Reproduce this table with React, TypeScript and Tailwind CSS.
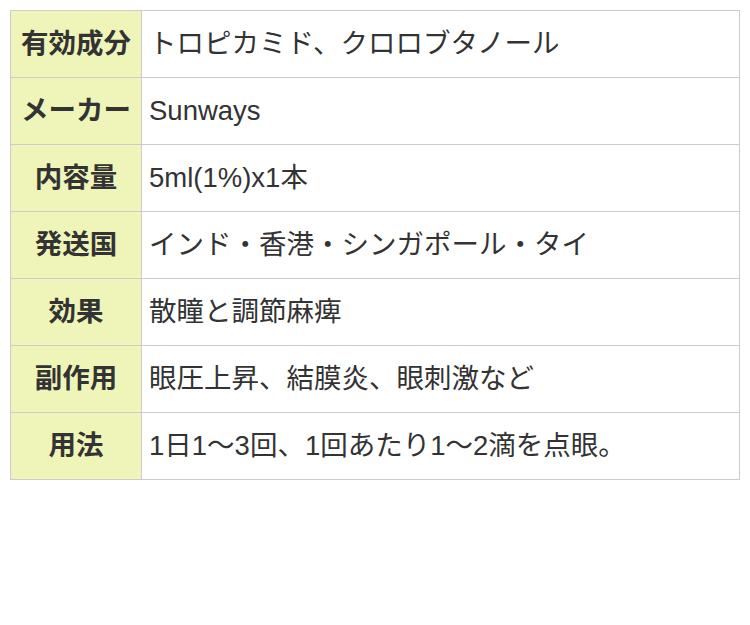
import React from "react";

const rows: [string, string][] = [
  ["有効成分", "トロピカミド、クロロブタノール"],
  ["メーカー", "Sunways"],
  ["内容量", "5ml(1%)x1本"],
  ["発送国", "インド・香港・シンガポール・タイ"],
  ["効果", "散瞳と調節麻痺"],
  ["副作用", "眼圧上昇、結膜炎、眼刺激など"],
  ["用法", "1日1〜3回、1回あたり1〜2滴を点眼。"],
];

export default function App() {
  return (
    <div className="w-[750px] h-[625px] bg-white pt-[10px] pl-[10px]" style={{ fontFamily: '"Liberation Sans", "Noto Sans CJK JP", sans-serif' }}>
      <table className="w-[730px] border-collapse text-[27.5px] text-[#333]">
        <tbody>
          {rows.map(([k, v]) => (
            <tr key={k} className="h-[67px]">
              <th className="w-[131px] border border-[#ccc] bg-[#eff5b9] text-center font-bold p-0 whitespace-nowrap">{k}</th>
              <td className="border border-[#ccc] pl-[7px] text-left">{v}</td>
            </tr>
          ))}
        </tbody>
      </table>
    </div>
  );
}
